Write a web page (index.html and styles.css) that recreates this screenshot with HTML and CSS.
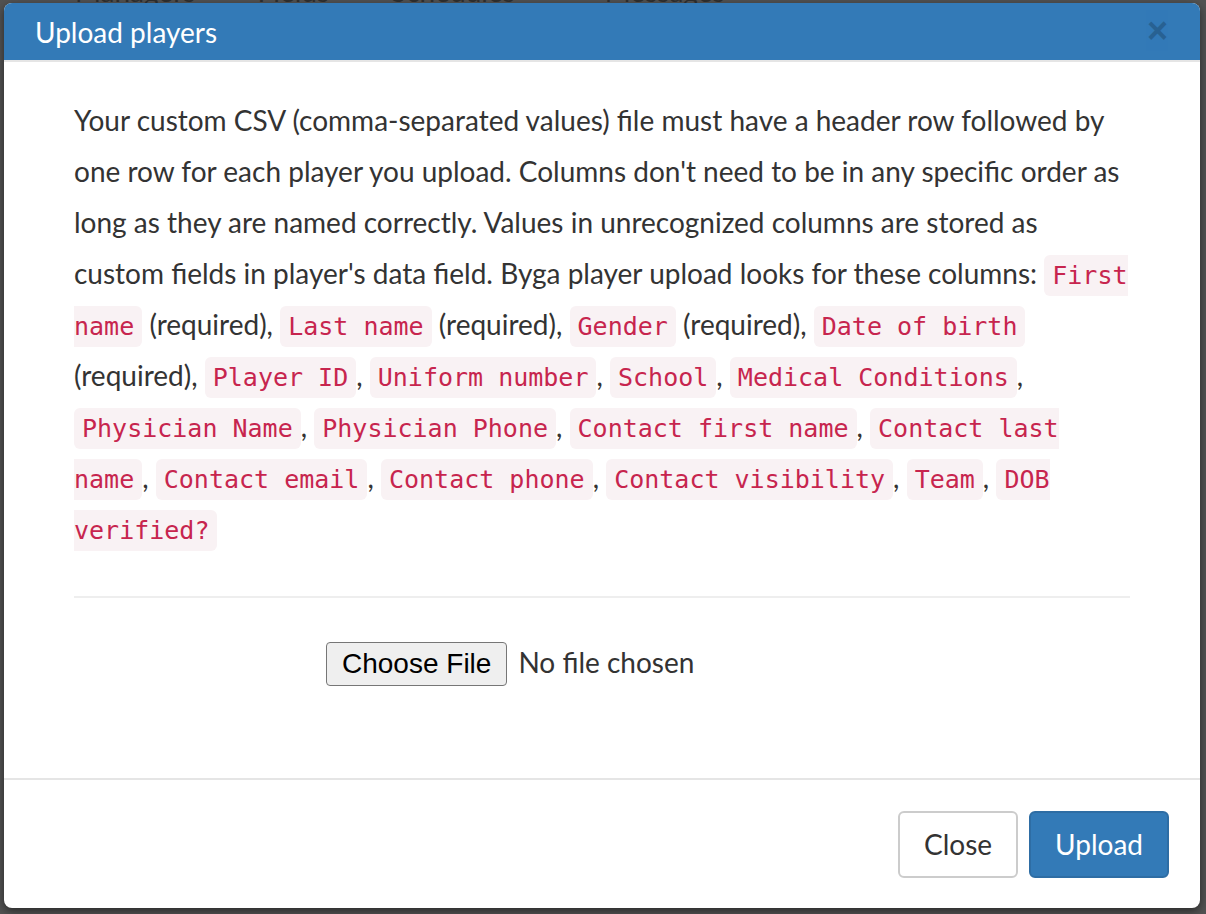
FILE: index.html
```html
<!DOCTYPE html>
<html lang="en">
<head>
  <meta charset="UTF-8" />
  <title>Upload players</title>
  <link rel="stylesheet" href="styles.css">
</head>
<body>
  <div class="page-nav">
    <span>Managers</span>
    <span>Fields</span>
    <span>Schedules</span>
    <span class="wide">Messages</span>
  </div>

  <div class="modal">
    <div class="modal-header">
      <h4 class="modal-title">Upload players</h4>
      <span class="close">&times;</span>
    </div>

    <div class="modal-body">
      <p class="help">
        Your custom CSV (comma-separated values) file must have a header row followed by one row for each player you upload. Columns don't need to be in any specific order as long as they are named correctly. Values in unrecognized columns are stored as custom fields in player's data field. Byga player upload looks for these columns:
        <code>First name</code> (required), <code>Last name</code> (required), <code>Gender</code> (required), <code>Date of birth</code> (required), <code>Player ID</code>, <code>Uniform number</code>, <code>School</code>, <code>Medical Conditions</code>, <code>Physician Name</code>, <code>Physician Phone</code>, <code>Contact first name</code>, <code>Contact last name</code>, <code>Contact email</code>, <code>Contact phone</code>, <code>Contact visibility</code>, <code>Team</code>, <code>DOB verified?</code>
      </p>
      <hr />
      <div class="file-row">
        <button type="button" class="file-btn">Choose File</button>
        <span class="file-name">No file chosen</span>
      </div>
    </div>

    <div class="modal-footer">
      <button type="button" class="btn btn-default">Close</button>
      <button type="button" class="btn btn-primary">Upload</button>
    </div>
  </div>
</body>
</html>
```

FILE: styles.css
```css
body {
  margin: 0;
  background-color: #525252;
  font-family: 'Lato', sans-serif;
  color: #333;
  height: 914px;
  overflow: hidden;
}

.page-nav {
  display: flex;
  gap: 62px;
  padding-left: 75px;
  margin-top: -25px;
  font-size: 28px;
  line-height: 32px;
  color: #2f2f2f;
}

.page-nav .wide {
  margin-left: 28px;
}

.modal {
  position: absolute;
  top: 3px;
  left: 4px;
  width: 1196px;
  height: 905px;
  background: #fff;
  border-radius: 8px;
  overflow: hidden;
  box-shadow: 0 3px 9px rgba(0, 0, 0, 0.5);
  display: flex;
  flex-direction: column;
}

.modal-header {
  background-color: #337ab7;
  height: 57px;
  border-bottom: 2px solid #e5e5e5;
  display: flex;
  align-items: center;
  justify-content: space-between;
  padding: 0 32px 0 31px;
}

.modal-title {
  margin: 0;
  color: #fff;
  font-size: 28px;
  font-weight: normal;
}

.close {
  font-family: 'Liberation Sans', sans-serif;
  font-size: 36px;
  font-weight: bold;
  color: #000;
  opacity: 0.2;
  line-height: 1;
  margin-top: -2px;
}

.modal-body {
  flex: 1;
  padding: 33px 70px 0 70px;
}

.help {
  margin: 0;
  font-size: 28px;
  line-height: 51px;
}

code {
  font-family: 'DejaVu Sans Mono', monospace;
  font-size: 25px;
  line-height: 1;
  color: #c7254e;
  background-color: #f9f2f4;
  padding: 6px 8px;
  border-radius: 6px;
}

hr {
  border: 0;
  border-top: 2px solid #eee;
  margin: 42px 0 44px 0;
}

.file-row {
  display: flex;
  align-items: center;
  gap: 11px;
  padding-left: 252px;
}

.file-btn {
  font-family: 'Liberation Sans', sans-serif;
  font-size: 28px;
  color: #000;
  background: #efefef;
  border: 1px solid #767676;
  border-radius: 4px;
  height: 44px;
  padding: 0 15px;
}

.file-name {
  font-size: 28px;
  margin-top: -4px;
}

.modal-footer {
  border-top: 2px solid #e5e5e5;
  height: 128px;
  display: flex;
  justify-content: flex-end;
  align-items: center;
  gap: 11px;
  padding-right: 31px;
}

.btn {
  font-family: 'Lato', sans-serif;
  font-size: 28px;
  height: 67px;
  padding: 0 24px;
  border-radius: 6px;
  cursor: pointer;
}

.btn-default {
  background: #fff;
  color: #333;
  border: 2px solid #ccc;
}

.btn-primary {
  background: #337ab7;
  color: #fff;
  border: 2px solid #2e6da4;
}
```
